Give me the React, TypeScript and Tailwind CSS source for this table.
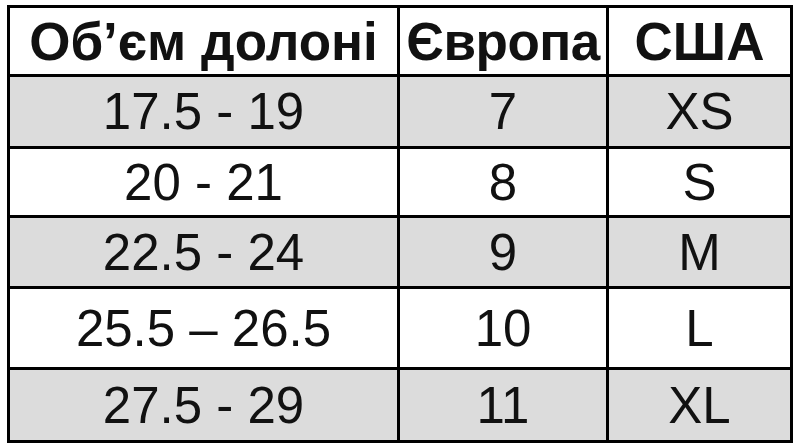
const rows = [
  { palm: "17.5 - 19", eu: "7", us: "XS", h: "h-[72px]", grey: true },
  { palm: "20 - 21", eu: "8", us: "S", h: "h-[69px]", grey: false },
  { palm: "22.5 - 24", eu: "9", us: "M", h: "h-[71px]", grey: true },
  { palm: "25.5 – 26.5", eu: "10", us: "L", h: "h-[81px]", grey: false },
  { palm: "27.5 - 29", eu: "11", us: "XL", h: "h-[73px]", grey: true },
];

export default function App() {
  return (
    <div className="w-[800px] h-[446px] bg-white pt-[5px] pl-[7px] font-['Liberation_Sans',Arial,sans-serif] text-[#111]">
      <table className="border-collapse border-[3px] border-black table-fixed w-[783px]">
        <colgroup>
          <col className="w-[390px]" />
          <col className="w-[209px]" />
          <col className="w-[184px]" />
        </colgroup>
        <thead>
          <tr className="h-[69px] bg-white">
            <th className="border-[3px] border-black p-0 text-center align-middle text-[53px] font-bold leading-none">
              Об’єм долоні
            </th>
            <th className="border-[3px] border-black p-0 text-center align-middle text-[53px] font-bold leading-none tracking-[-0.5px]">
              Європа
            </th>
            <th className="border-[3px] border-black p-0 text-center align-middle text-[53px] font-bold leading-none">
              США
            </th>
          </tr>
        </thead>
        <tbody>
          {rows.map((r) => (
            <tr key={r.palm} className={`${r.h} ${r.grey ? "bg-[#dcdcdc]" : "bg-white"}`}>
              <td className="border-[3px] border-black p-0 text-center align-middle text-[51px] leading-none">
                {r.palm}
              </td>
              <td className="border-[3px] border-black p-0 text-center align-middle text-[51px] leading-none">
                {r.eu}
              </td>
              <td className="border-[3px] border-black p-0 text-center align-middle text-[51px] leading-none">
                {r.us}
              </td>
            </tr>
          ))}
        </tbody>
      </table>
    </div>
  );
}
